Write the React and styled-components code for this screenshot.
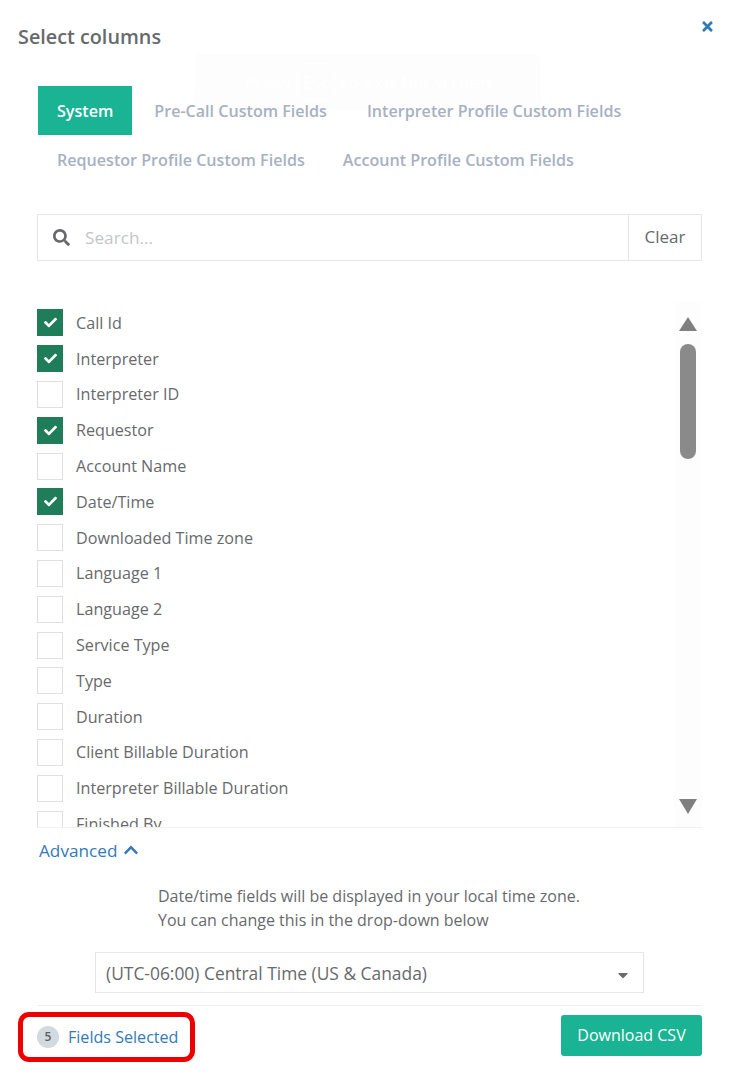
import React from 'react';
import styled, { createGlobalStyle } from 'styled-components';
import { FaSearch, FaCheck, FaTimes, FaChevronUp, FaCaretDown } from 'react-icons/fa';

const GlobalStyle = createGlobalStyle`
  html, body { margin: 0; padding: 0; background: #fff; }
  body { font-family: "Open Sans", "Liberation Sans", sans-serif; color: #676a6c; }
  * { box-sizing: border-box; }
`;

const Modal = styled.div`
  position: relative;
  width: 743px;
  height: 1074px;
  overflow: hidden;
  padding: 0 41px 0 37px;
`;

const Header = styled.div`
  display: flex;
  justify-content: space-between;
  height: 86px;
  margin-left: -19px;
  margin-right: -13px;
`;

const Title = styled.h4`
  margin: 25px 0 0;
  font-size: 19.8px;
  line-height: 24px;
  font-weight: 600;
  color: #676a6c;
`;

const Close = styled.span`
  margin-top: 19px;
  color: #2f7ab9;
  font-size: 15px;
  line-height: 16px;
`;

const Toast = styled.div`
  position: absolute;
  left: 195px;
  top: 53px;
  width: 345px;
  height: 57px;
  display: flex;
  align-items: center;
  justify-content: center;
  gap: 6px;
  background: #fdfdfd;
  border-radius: 6px;
  color: #fff;
  font-size: 18px;
  font-weight: 600;
`;

const Key = styled.span`
  padding: 6px 4px;
  border: 1px solid #fff;
  border-radius: 4px;
`;

const Tabs = styled.div`
  position: relative;
  display: flex;
  flex-wrap: wrap;
  height: 128px;
  margin-left: 1px;
  align-content: flex-start;
`;

const Tab = styled.div`
  height: 49px;
  padding: 0 ${props => props.pad || 19}px;
  line-height: 51px;
  font-size: 16.1px;
  font-weight: 600;
  white-space: nowrap;
  color: ${props => (props.active ? '#fff' : '#a7b1c2')};
  background: ${props => (props.active ? '#1ab394' : 'transparent')};
`;

const SearchBar = styled.div`
  display: flex;
  align-items: stretch;
  height: 47px;
  border: 1px solid #e5e6e7;
`;

const SearchIcon = styled.span`
  width: 47px;
  padding-left: 15px;
  display: flex;
  align-items: center;
  color: #676a6c;
  font-size: 17px;
`;

const SearchText = styled.div`
  flex: 1;
  line-height: 46px;
  font-size: 17.2px;
  color: #c4c6c8;
`;

const ClearButton = styled.div`
  width: 73px;
  border-left: 1px solid #e5e6e7;
  line-height: 44px;
  text-align: center;
  font-size: 17px;
  color: #676a6c;
`;

const ListWrap = styled.div`
  display: flex;
  height: 526px;
  margin-top: 41px;
  border-bottom: 1px solid #f1f1f1;
  overflow: hidden;
`;

const List = styled.div`
  flex: 1;
  padding-top: 3px;
`;

const Row = styled.div`
  display: flex;
  align-items: center;
  height: 35.8px;
  gap: 13px;
  font-size: 16.15px;
  color: #676a6c;
`;

const Box = styled.span`
  width: 26px;
  height: 27px;
  flex-shrink: 0;
  display: flex;
  align-items: center;
  justify-content: center;
  color: #fff;
  font-size: 13px;
  background: ${props => (props.checked ? '#1f7d5a' : '#fff')};
  border: 1px solid ${props => (props.checked ? '#1f7d5a' : '#e0dfdb')};
`;

const Track = styled.div`
  width: 28px;
  background: #fdfdfd;
  display: flex;
  flex-direction: column;
  align-items: center;
  padding-top: 15px;
`;

const Thumb = styled.div`
  width: 16px;
  height: 115px;
  margin-top: 13px;
  border-radius: 8px;
  background: #8a8a8a;
`;

const Arrow = styled.div`
  width: 0;
  height: 0;
  border-left: 9px solid transparent;
  border-right: 9px solid transparent;
  ${props => (props.down
    ? 'border-top: 15px solid #808080; margin-top: auto; margin-bottom: 13px;'
    : 'border-bottom: 14px solid #808080;')}
`;

const AdvancedLink = styled.div`
  display: flex;
  align-items: center;
  gap: 6px;
  height: 22px;
  margin: 11px 0 0 2px;
  font-size: 17.2px;
  color: #337ab7;
`;

const Note = styled.div`
  margin: 23px 0 0 121px;
  font-size: 16px;
  line-height: 24px;
  color: #676a6c;
`;

const Select = styled.div`
  display: flex;
  align-items: center;
  justify-content: space-between;
  width: 549px;
  height: 41px;
  margin: 20px 0 0 58px;
  padding: 0 12px 0 10px;
  border: 1px solid #e5e6e7;
  font-size: 17.4px;
  color: #676a6c;
`;

const Caret = styled(FaCaretDown)`
  margin-top: 5px;
`;

const Footer = styled.div`
  display: flex;
  align-items: center;
  justify-content: space-between;
  margin-top: 12px;
  padding-top: 6px;
  border-top: 1px solid #eeeeee;
`;

const Selected = styled.div`
  display: flex;
  align-items: center;
  gap: 9px;
  width: 177px;
  height: 50px;
  margin-left: -19px;
  padding-left: 14px;
  border: 5px solid #ee0000;
  border-radius: 11px;
  font-size: 16.1px;
  white-space: nowrap;
  color: #337ab7;
`;

const Badge = styled.span`
  width: 22px;
  height: 22px;
  border-radius: 50%;
  background: #d1dade;
  color: #5e5e5e;
  font-size: 12px;
  font-weight: 600;
  text-align: center;
  line-height: 22px;
`;

const DownloadButton = styled.div`
  width: 141px;
  height: 41px;
  margin-top: -3px;
  border-radius: 3px;
  background: #1ab394;
  color: #fff;
  font-size: 16px;
  line-height: 41px;
  text-align: center;
`;

const fields = [
  ['Call Id', true],
  ['Interpreter', true],
  ['Interpreter ID', false],
  ['Requestor', true],
  ['Account Name', false],
  ['Date/Time', true],
  ['Downloaded Time zone', false],
  ['Language 1', false],
  ['Language 2', false],
  ['Service Type', false],
  ['Type', false],
  ['Duration', false],
  ['Client Billable Duration', false],
  ['Interpreter Billable Duration', false],
  ['Finished By', false],
];

const App = () => (
  <Modal>
    <GlobalStyle />
    <Header>
      <Title>Select columns</Title>
      <Close><FaTimes /></Close>
    </Header>
    <Toast>Press <Key>Esc</Key> to exit full screen</Toast>
    <Tabs>
      <Tab active>System</Tab>
      <Tab pad={22}>Pre-Call Custom Fields</Tab>
      <Tab pad={18}>Interpreter Profile Custom Fields</Tab>
      <Tab>Requestor Profile Custom Fields</Tab>
      <Tab>Account Profile Custom Fields</Tab>
    </Tabs>
    <SearchBar>
      <SearchIcon><FaSearch /></SearchIcon>
      <SearchText>Search...</SearchText>
      <ClearButton>Clear</ClearButton>
    </SearchBar>
    <ListWrap>
      <List>
        {fields.map(([name, checked]) => (
          <Row key={name}>
            <Box checked={checked}>{checked && <FaCheck />}</Box>
            {name}
          </Row>
        ))}
      </List>
      <Track>
        <Arrow />
        <Thumb />
        <Arrow down />
      </Track>
    </ListWrap>
    <AdvancedLink>Advanced <FaChevronUp size={16} /></AdvancedLink>
    <Note>
      Date/time fields will be displayed in your local time zone.<br />
      You can change this in the drop-down below
    </Note>
    <Select>
      (UTC-06:00) Central Time (US &amp; Canada)
      <Caret size={16} />
    </Select>
    <Footer>
      <Selected><Badge>5</Badge>Fields Selected</Selected>
      <DownloadButton>Download CSV</DownloadButton>
    </Footer>
  </Modal>
);

export default App;
